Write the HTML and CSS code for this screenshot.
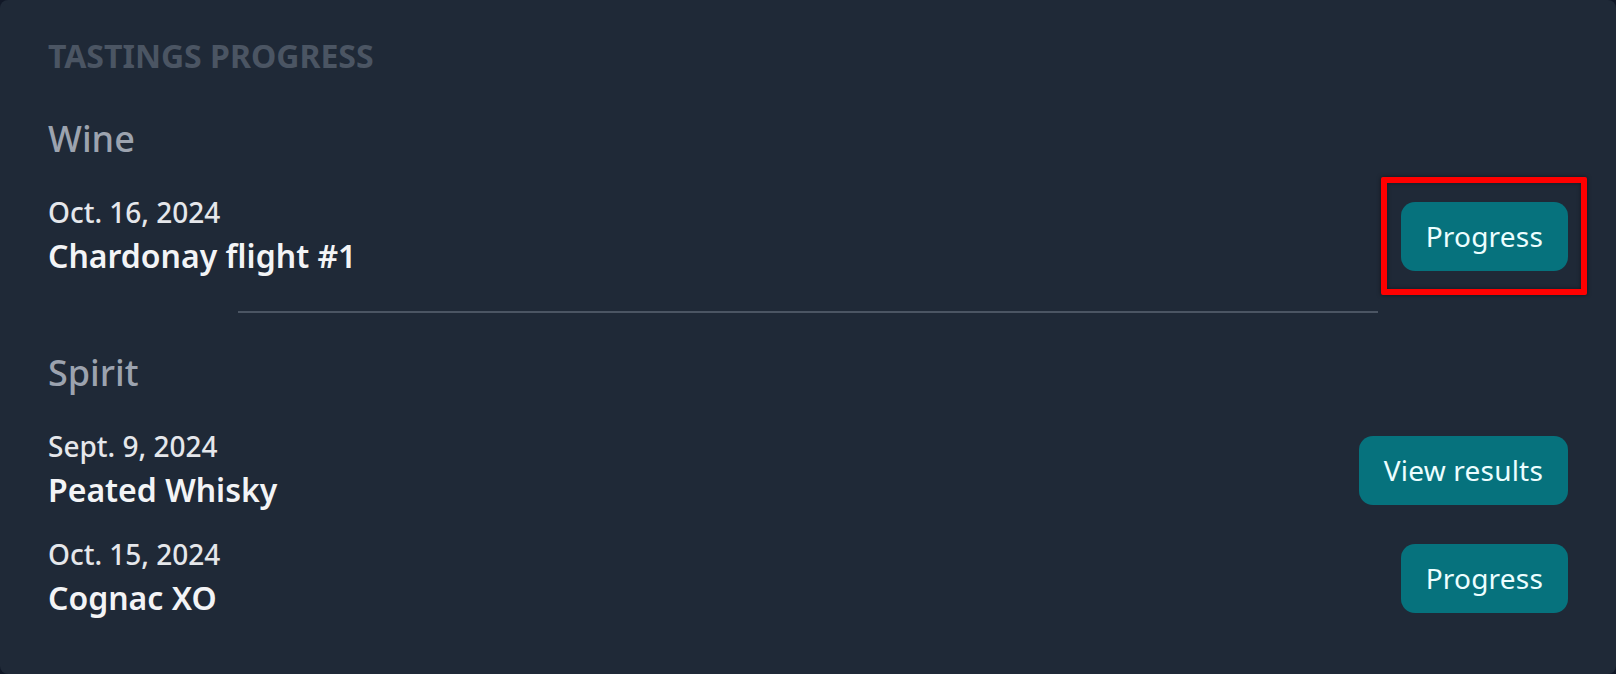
FILE: index.html
```html
<!DOCTYPE html>
<html lang="en">
<head>
<meta charset="utf-8">
<title>Tastings progress</title>
<link rel="stylesheet" href="styles.css">
</head>
<body>
<div class="card">
  <h2 class="card-title">Tastings progress</h2>

  <section class="group">
    <h3 class="group-title">Wine</h3>
    <div class="rows">
      <div class="row">
        <div class="info">
          <div class="date">Oct. 16, 2024</div>
          <div class="name">Chardonay flight #1</div>
        </div>
        <span class="highlight-wrap"><a class="btn">Progress</a><span class="highlight"></span></span>
      </div>
    </div>
  </section>

  <div class="divider"></div>

  <section class="group">
    <h3 class="group-title">Spirit</h3>
    <div class="rows">
      <div class="row">
        <div class="info">
          <div class="date">Sept. 9, 2024</div>
          <div class="name">Peated Whisky</div>
        </div>
        <a class="btn">View results</a>
      </div>
      <div class="row">
        <div class="info">
          <div class="date">Oct. 15, 2024</div>
          <div class="name">Cognac XO</div>
        </div>
        <a class="btn">Progress</a>
      </div>
    </div>
  </section>
</div>
</body>
</html>
```

FILE: styles.css
```css
html, body {
  margin: 0;
  padding: 0;
}
body {
  background: #111827;
  font-family: "Noto Sans", "Open Sans", sans-serif;
}
.card {
  box-sizing: border-box;
  min-height: 674px;
  background: #1f2937;
  border-radius: 8px;
  padding: 32px 48px 48px;
}
.card-title {
  margin: 0 0 31px;
  font-size: 32px;
  line-height: 48px;
  font-weight: 700;
  text-transform: uppercase;
  color: #4b5563;
}
.group-title {
  margin: 0 0 25px;
  font-size: 36px;
  line-height: 56px;
  font-weight: 500;
  color: #9ca3af;
}
.rows {
  display: flex;
  flex-direction: column;
  gap: 20px;
}
.row {
  display: flex;
  justify-content: space-between;
  align-items: center;
}
.date {
  font-size: 28px;
  line-height: 40px;
  font-weight: 500;
  color: #e5e7eb;
}
.name {
  font-size: 32px;
  line-height: 48px;
  font-weight: 600;
  color: #f3f4f6;
}
.btn {
  display: inline-flex;
  align-items: center;
  height: 69px;
  padding: 0 25px;
  border-radius: 14px;
  background: #06727d;
  color: #ecfeff;
  font-size: 28px;
  font-weight: 400;
  letter-spacing: 0.2px;
  cursor: pointer;
}
.divider {
  width: 75%;
  height: 2px;
  margin: 31px auto 32px;
  background: #4b5563;
}
.highlight-wrap {
  position: relative;
  display: inline-flex;
}
.highlight {
  position: absolute;
  left: -20px;
  right: -19px;
  top: -25px;
  bottom: -24px;
  border: 6px solid #ff0000;
  border-radius: 2px;
  box-shadow: 0 0 4px rgba(0, 0, 0, 0.5), inset 0 0 4px rgba(0, 0, 0, 0.4);
  pointer-events: none;
}
```
